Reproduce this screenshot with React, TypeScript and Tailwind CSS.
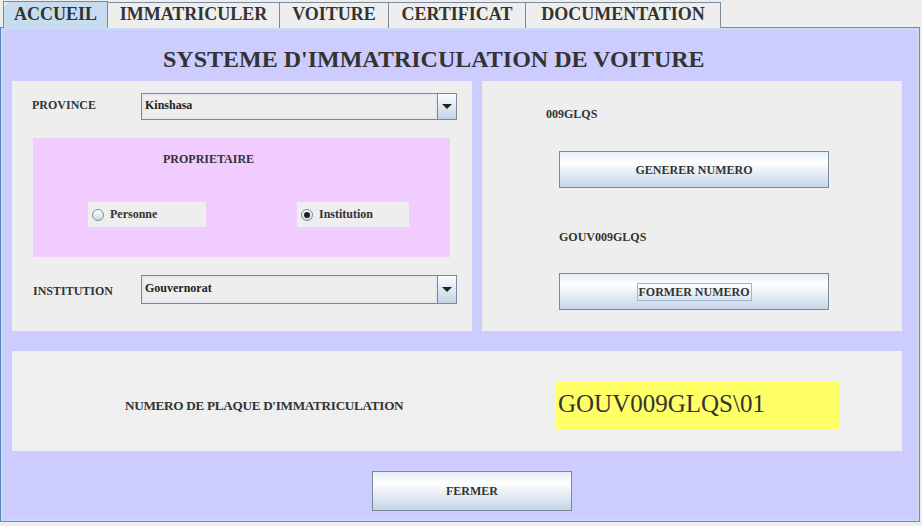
import React from "react";

const serif = { fontFamily: '"Liberation Serif", "Times New Roman", serif' };

function Tab({ label, selected, w }: { label: string; selected?: boolean; w: number }) {
  return (
    <div
      className={
        "relative flex items-start justify-center border border-b-0 border-[#7a8a99] font-bold text-[18px] leading-none text-[#333] " +
        (selected ? "bg-[#c8dcf0] h-[27px] pt-[3px] -mr-px" : "bg-[#eeeeee] h-[26px] pt-[2px] -mr-px")
      }
      style={{ width: w }}
    >
      <span>{label}</span>
      <div className="absolute left-0 top-0 w-[5px] h-[5px] bg-[linear-gradient(135deg,#eeeeee_50%,transparent_50%)]" />
    </div>
  );
}

function Combo({ value, h }: { value: string; h: number }) {
  return (
    <div className="flex w-[316px] border border-[#7a8a99] bg-[#eeeeee]" style={{ height: h }}>
      <div className="flex-1 border-2 border-[#e2e9f1] flex items-center pl-[1px] pb-[3px] font-bold text-[12px] text-[#222]">
        {value}
      </div>
      <div className="w-[19px] border-l border-[#7a8a99] bg-gradient-to-b from-[#fbfdff] to-[#c3d3e5] flex items-center justify-center">
        <div className="w-0 h-0 border-l-[5px] border-r-[5px] border-t-[5px] border-l-transparent border-r-transparent border-t-[#222]" />
      </div>
    </div>
  );
}

function Radio({ label, checked, w, ml }: { label: string; checked?: boolean; w: number; ml: number }) {
  return (
    <div className="h-[25px] bg-[#eeeeee] flex items-center pl-[4px]" style={{ width: w, marginLeft: ml }}>
      <div className="w-[12px] h-[12px] rounded-full border border-[#7a8a99] bg-gradient-to-b from-[#ffffff] to-[#c8d8e8] flex items-center justify-center">
        {checked && <div className="w-[6px] h-[6px] rounded-full bg-[#222]" />}
      </div>
      <span className="ml-[6px] font-bold text-[12px] text-[#333] pb-[2px]">{label}</span>
    </div>
  );
}

function Btn({ label, w, h, focus, cls }: { label: string; w: number; h: number; focus?: boolean; cls?: string }) {
  return (
    <div
      className={
        "flex items-center justify-center border border-[#7a8a99] bg-[linear-gradient(to_bottom,#e6edf5_0%,#ffffff_30%,#c4d5e7_100%)] font-bold text-[#333] " +
        (cls || "text-[12px]")
      }
      style={{ width: w, height: h }}
    >
      <span className={focus ? "border border-[#9fb5cf] px-[1px] leading-[16px]" : ""}>{label}</span>
    </div>
  );
}

export default function App() {
  return (
    <div className="w-[922px] h-[526px] bg-[#eeeeee] relative overflow-hidden" style={serif}>
      {/* tabs */}
      <div className="flex items-end h-[28px] pl-[3px]">
        <Tab label="ACCUEIL" selected w={105} />
        <Tab label="IMMATRICULER" w={173} />
        <Tab label="VOITURE" w={110} />
        <Tab label="CERTIFICAT" w={138} />
        <Tab label="DOCUMENTATION" w={196} />
      </div>
      {/* content */}
      <div className="w-[920px] h-[495px] border border-[#7a8a99] border-l-[#5b7fc4] -mt-px">
        <div className="w-full h-full border-2 border-[#c8dcf0] bg-[#ccccff] pl-[9px] flex flex-col">
          <div className="h-[51px] flex items-center pl-[151px] pt-[6px]">
            <h1 className="font-bold text-[24px] text-[#333] leading-none">SYSTEME D'IMMATRICULATION DE VOITURE</h1>
          </div>
          <div className="flex gap-[10px]">
            {/* left */}
            <div className="w-[460px] h-[250px] bg-[#eeeeee] flex flex-col pt-[12px]">
              <div className="flex items-center">
                <div className="w-[129px] pl-[20px] font-bold text-[12px] text-[#333] pb-[4px]">PROVINCE</div>
                <Combo value="Kinshasa" h={27} />
              </div>
              <div className="ml-[21px] mt-[18px] w-[417px] h-[119px] bg-[#f0ccff] flex flex-col">
                <div className="pl-[130px] pt-[14px] font-bold text-[12px] text-[#333] leading-[14px]">PROPRIETAIRE</div>
                <div className="flex mt-[36px]">
                  <Radio label="Personne" w={118} ml={55} />
                  <Radio label="Institution" checked w={112} ml={91} />
                </div>
              </div>
              <div className="flex items-center mt-[18px]">
                <div className="w-[129px] pl-[21px] font-bold text-[12px] text-[#333] pt-[2px]">INSTITUTION</div>
                <Combo value="Gouvernorat" h={29} />
              </div>
            </div>
            {/* right */}
            <div className="w-[420px] h-[250px] bg-[#eeeeee] flex flex-col">
              <div className="pl-[64px] pt-[26px] font-bold text-[12px] text-[#333] leading-[14px]">009GLQS</div>
              <div className="pl-[77px] mt-[30px]">
                <Btn label="GENERER NUMERO" w={270} h={37} />
              </div>
              <div className="pl-[77px] mt-[42px] font-bold text-[12px] text-[#333] leading-[14px]">GOUV009GLQS</div>
              <div className="pl-[77px] mt-[29px]">
                <Btn label="FORMER NUMERO" w={270} h={37} focus />
              </div>
            </div>
          </div>
          {/* bottom */}
          <div className="mt-[20px] w-[890px] h-[100px] bg-[#efefef] flex items-start">
            <div className="w-[544px] pl-[113px] pt-[48px] font-bold text-[13.2px] text-[#333] leading-[14px] tracking-[-0.3px]">
              NUMERO DE PLAQUE D'IMMATRICULATION
            </div>
            <div className="mt-[31px] w-[283px] h-[47px] bg-[#ffff66] flex items-center pl-[2px] pb-[4px] text-[25px] text-[#333] leading-none">
              GOUV009GLQS\01
            </div>
          </div>
          <div className="mt-[20px] pl-[360px]">
            <Btn label="FERMER" w={200} h={40} cls="text-[12px]" />
          </div>
        </div>
      </div>
    </div>
  );
}
